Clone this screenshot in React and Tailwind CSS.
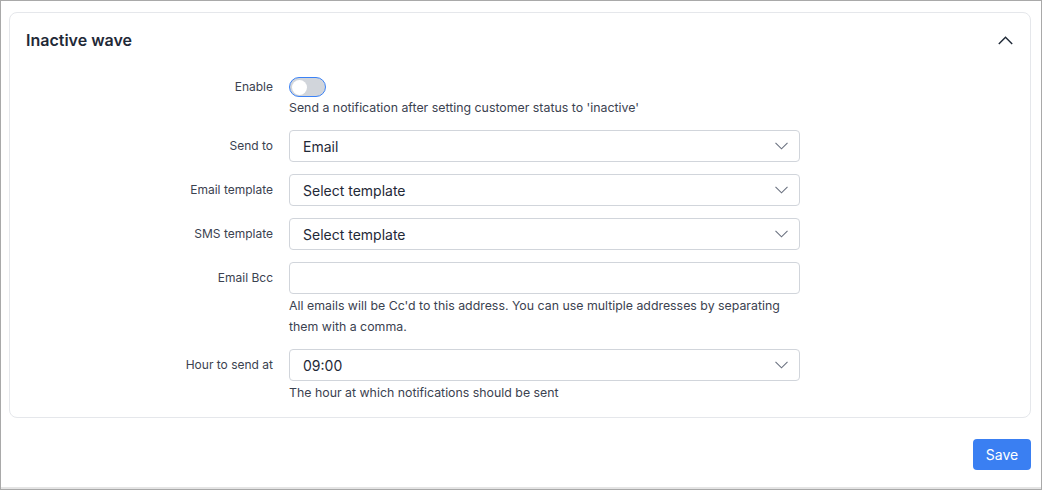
import React from "react";

function ChevronDown() {
  return (
    <svg width="13" height="8" viewBox="0 0 13 8" fill="none">
      <polyline points="0.5,0.8 6.5,6.8 12.5,0.8" stroke="#6b7280" strokeWidth="1.1" />
    </svg>
  );
}

function ChevronUp() {
  return (
    <svg width="15" height="9" viewBox="0 0 15 9" fill="none">
      <polyline points="0.8,8 7.5,1.3 14.2,8" stroke="#1f2937" strokeWidth="1.4" />
    </svg>
  );
}

function Select({ value }) {
  return (
    <div className="w-[511px] h-8 border border-[#d1d5db] rounded-[4px] bg-white flex items-center justify-between pl-[13px] pr-[11px] text-[14px] text-[#1f2937]">
      <span>{value}</span>
      <ChevronDown />
    </div>
  );
}

function Row({ label, children, labelClass = "h-8" }) {
  return (
    <div className="flex mb-3">
      <div className={"w-[263px] shrink-0 flex items-center justify-end text-[12px] text-[#3b4250] " + labelClass}>
        {label}
      </div>
      <div className="ml-4 flex flex-col">{children}</div>
    </div>
  );
}

function Help({ children }) {
  return <div className="text-[12.35px] leading-[21px] text-[#3b4250] w-[511px]">{children}</div>;
}

export default function App() {
  return (
    <div className="w-[1043px] h-[491px] bg-white" style={{ fontFamily: "Inter, 'Noto Sans', sans-serif" }}>
      <div className="w-[1042px] h-[490px] border border-[#a9a9a9] flex flex-col">
        <div className="pl-2 pt-[11px]">
          <div className="w-[1022px] border border-[#e5e7eb] rounded-lg bg-white">
            <div className="h-[54px] pl-4 pr-[17px] flex items-start justify-between pt-[15px]">
              <h2 className="text-[16px] leading-6 font-semibold text-[#1f2937]">Inactive wave</h2>
              <div className="pt-[8px]">
                <ChevronUp />
              </div>
            </div>
            <div className="pt-[10px] pb-[14px]">
              <Row label="Enable" labelClass="h-5">
                <div className="h-5 flex items-center">
                  <div className="w-[37px] h-[20px] rounded-full bg-[#d1d5db] border border-[#3b82f6] flex items-center pl-[2px]">
                    <div className="w-[15px] h-[15px] rounded-full bg-white" />
                  </div>
                </div>
                <Help>Send a notification after setting customer status to 'inactive'</Help>
              </Row>
              <Row label="Send to">
                <Select value="Email" />
              </Row>
              <Row label="Email template">
                <Select value="Select template" />
              </Row>
              <Row label="SMS template">
                <Select value="Select template" />
              </Row>
              <Row label="Email Bcc">
                <div className="w-[511px] h-8 border border-[#d1d5db] rounded-[4px] bg-white" />
                <div className="mt-px">
                  <Help>
                    All emails will be Cc'd to this address. You can use multiple addresses by separating them with a comma.
                  </Help>
                </div>
              </Row>
              <div className="flex">
                <div className="w-[263px] shrink-0 h-8 flex items-center justify-end text-[12px] text-[#3b4250]">
                  Hour to send at
                </div>
                <div className="ml-4 flex flex-col">
                  <Select value="09:00" />
                  <div className="mt-px">
                    <Help>The hour at which notifications should be sent</Help>
                  </div>
                </div>
              </div>
            </div>
          </div>
          <div className="w-[1022px] flex justify-end mt-[21px]">
            <button className="w-[58px] h-[31px] rounded-[4px] bg-[#3a7ff2] text-white text-[14px] flex items-center justify-center">
              Save
            </button>
          </div>
        </div>
        <div className="flex-1" />
        <div className="h-[2px] bg-[#e4e4e4]" />
      </div>
    </div>
  );
}
